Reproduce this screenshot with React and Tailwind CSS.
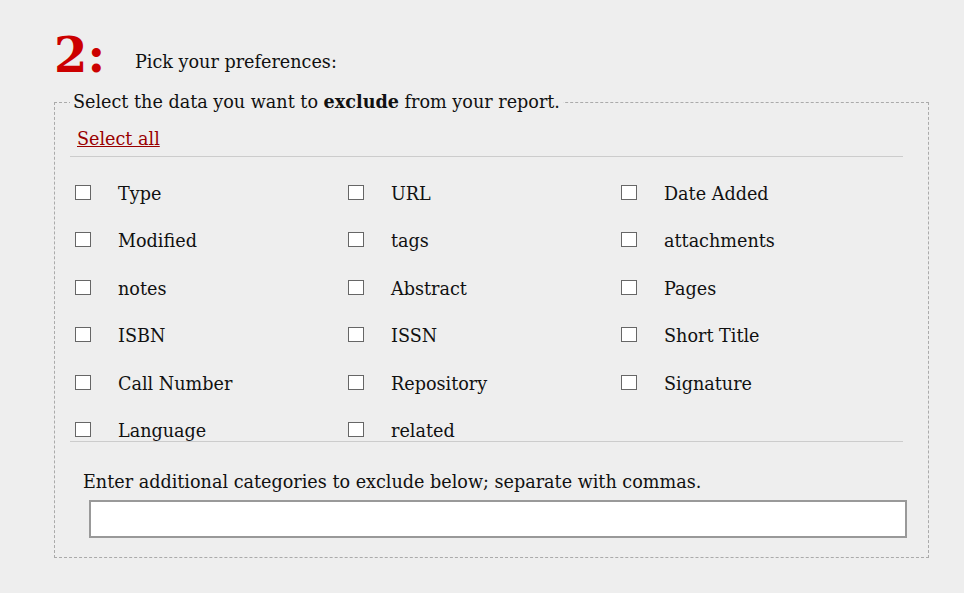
export default function App() {
  const items = [
    "Type", "URL", "Date Added",
    "Modified", "tags", "attachments",
    "notes", "Abstract", "Pages",
    "ISBN", "ISSN", "Short Title",
    "Call Number", "Repository", "Signature",
    "Language", "related",
  ];
  return (
    <div className="w-[964px] h-[593px] bg-[#eeeeee] text-[#111] overflow-hidden" style={{ fontFamily: '"DejaVu Serif", Georgia, serif' }}>
      <div className="pl-[54px] h-[90px] flex items-start">
        <span className="mt-[30px] text-[48px] leading-[50px] font-bold text-[#cc0000] w-[81px]">2:</span>
        <span className="mt-[50px] text-[17.6px] leading-[24px]">Pick your preferences:</span>
      </div>
      <fieldset className="ml-[54px] w-[875px] h-[468px] border border-dashed border-[#aaa] pl-[15px] pr-[25px]">
        <legend className="text-[17.6px] leading-[24px] px-[3px]">Select the data you want to <b>exclude</b> from your report.</legend>
        <div className="border-b border-[#ccc] h-[43px] pl-[7px] pt-[13px]">
          <a href="#" className="text-[17.6px] leading-[24px] text-[#990000] underline">Select all</a>
        </div>
        <div className="grid grid-cols-[273px_273px_1fr] pt-[12px] h-[285px] border-b border-[#ccc]">
          {items.map((t) => (
            <div key={t} className="h-[47.4px] flex items-start pl-[5px]">
              <span className="mt-[16px] w-[16px] h-[15px] border border-[#666] bg-white shrink-0"></span>
              <span className="ml-[27px] text-[17.6px] leading-[24px] mt-[13px]">{t}</span>
            </div>
          ))}
        </div>
        <div className="pl-[13px] pt-[28px] text-[17.6px] leading-[24px]">Enter additional categories to exclude below; separate with commas.</div>
        <div className="pl-[19px] pt-[6px] mr-[-4px]">
          <input type="text" className="block w-full h-[38px] bg-white border-2 border-[#999] outline-none" />
        </div>
      </fieldset>
    </div>
  );
}
